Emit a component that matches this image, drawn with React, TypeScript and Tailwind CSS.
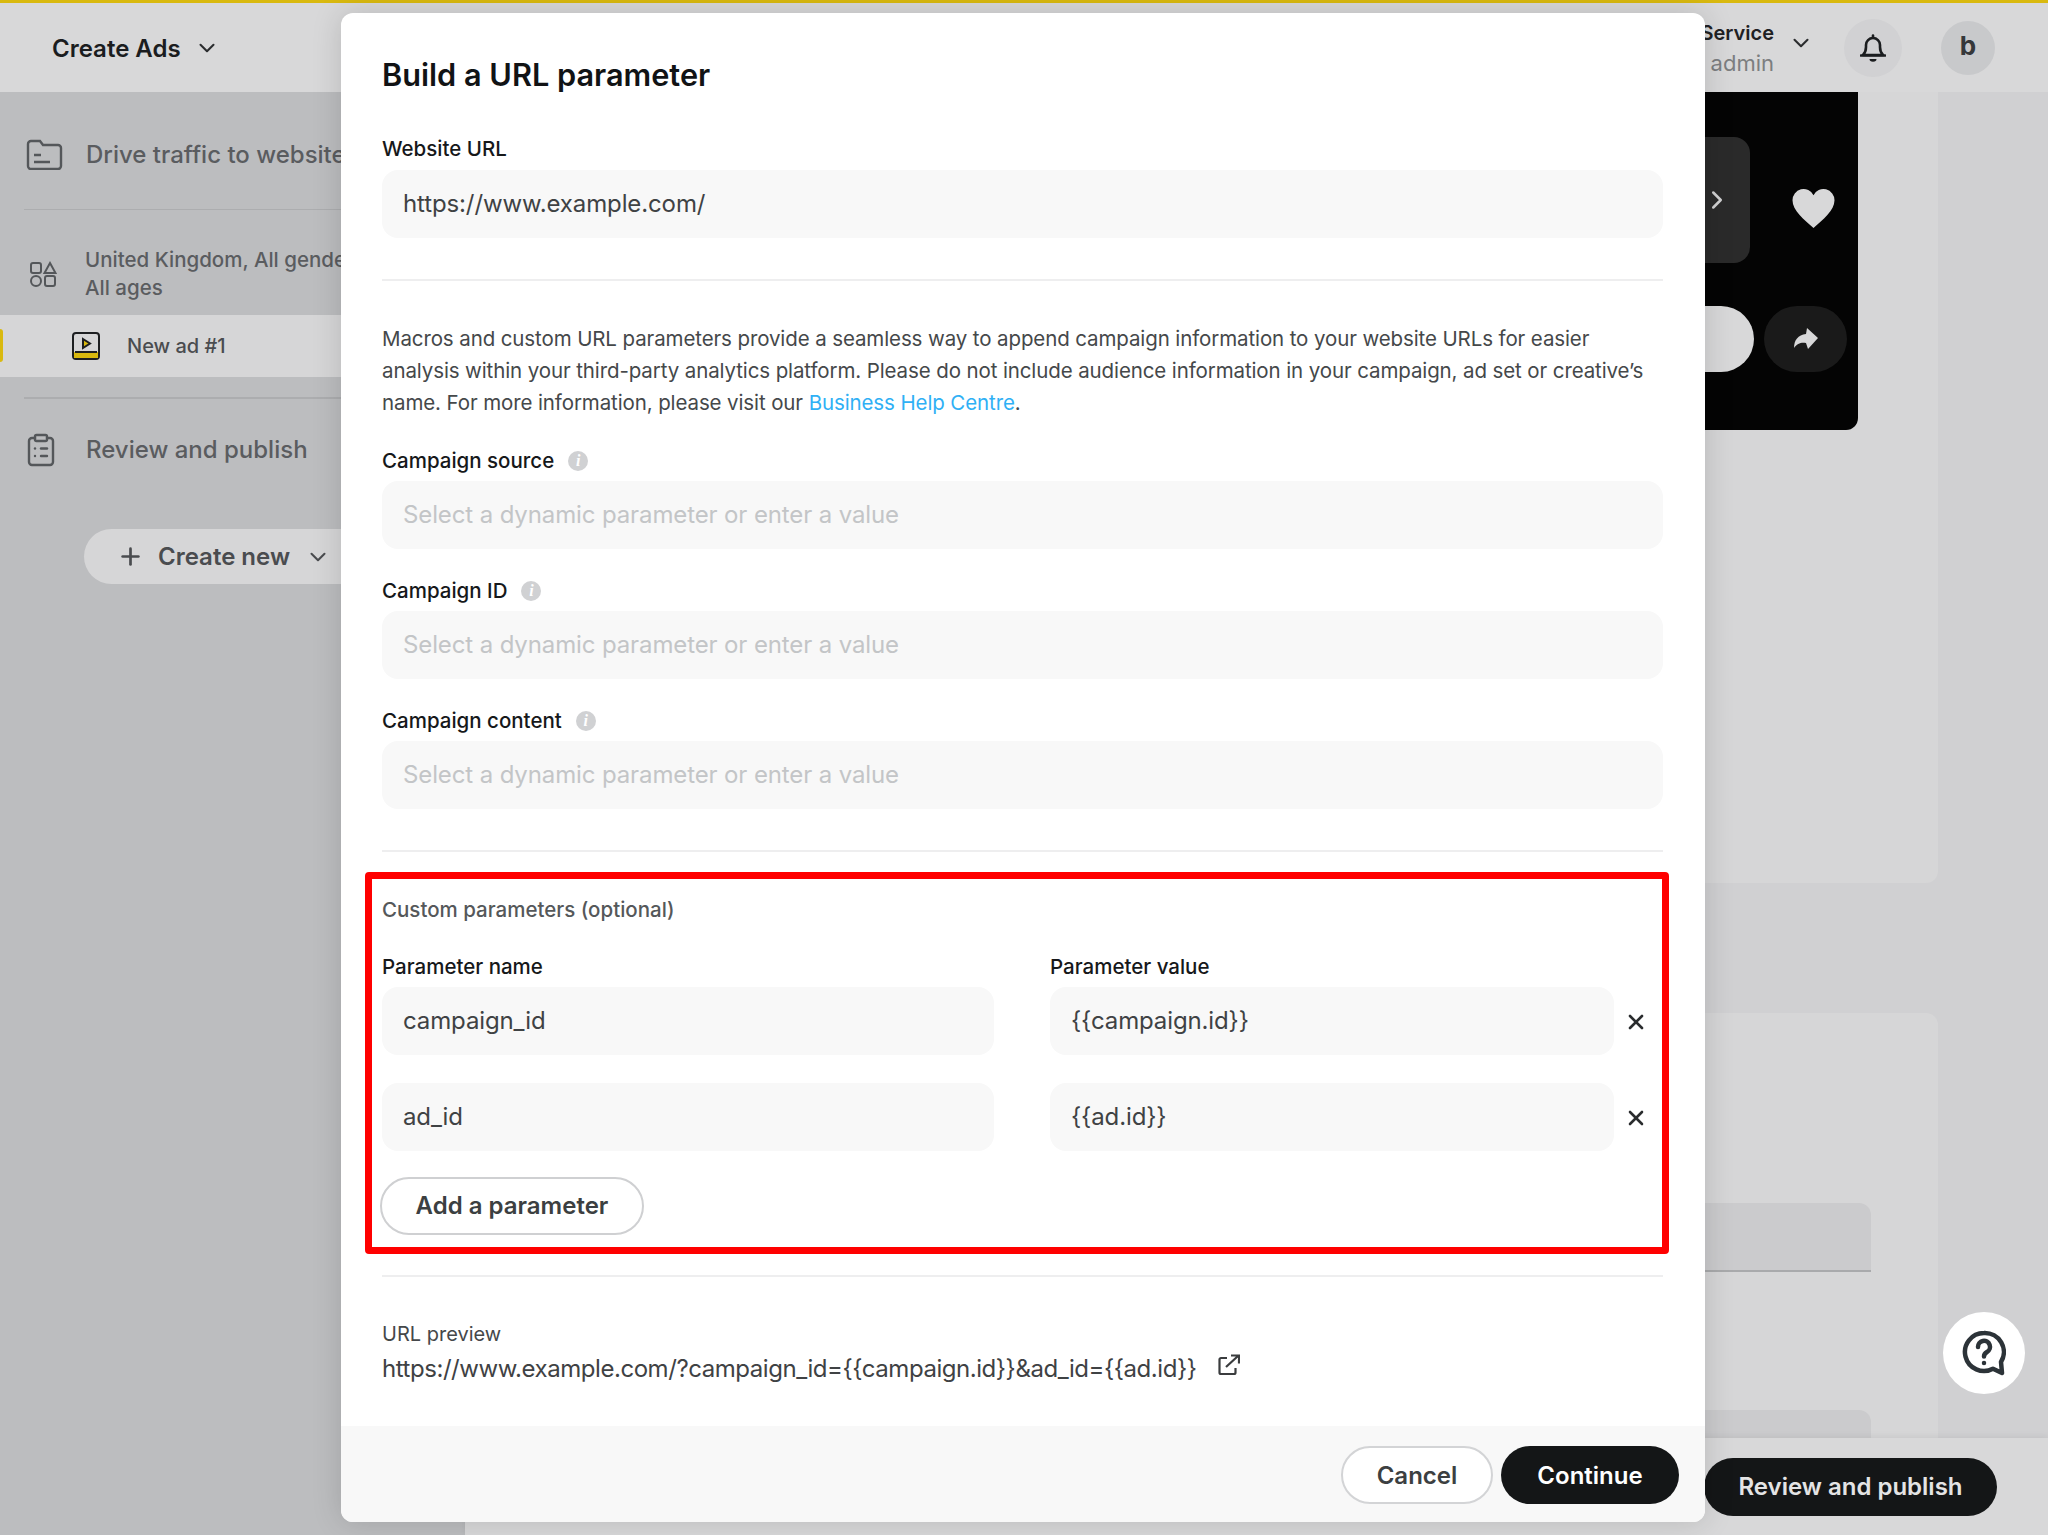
import {ChevronDown, ChevronRight, ClipboardList, Plus, X} from "lucide-react";

function Field({value, placeholder, className = ""}: {value?: string; placeholder?: string; className?: string}) {
  return (
    <div className={`flex h-[68px] items-center rounded-2xl bg-[#f8f8f8] px-[21px] text-[24px] tracking-[-0.12px] ${value ? "text-[#3f4244]" : "text-[#c3c5c7]"} ${className}`}>
      {value ?? placeholder}
    </div>
  );
}

function InfoDot() {
  return (
    <span className="flex h-5 w-5 items-center justify-center rounded-full bg-[#d0d1d3] text-[16px] font-bold italic leading-none text-white [font-family:'Liberation_Serif',serif]">i</span>
  );
}

function ParamField({label}: {label: string}) {
  return (
    <div>
      <div className="flex h-[20px] items-center gap-[14px] text-[20.5px] font-medium text-[#16181a]">
        <span>{label}</span>
        <InfoDot/>
      </div>
      <Field className="mt-[10px]" placeholder="Select a dynamic parameter or enter a value"/>
    </div>
  );
}

function Sidebar() {
  return (
    <aside className="flex w-[465px] shrink-0 flex-col bg-[#bcbdbf] text-[#5a5c5f]">
      <div className="flex h-[117px] items-center pl-[26px] pt-[8px]">
        <svg className="mb-[2px]" width="37" height="32" viewBox="0 0 37 32" fill="none" stroke="#54575a" strokeWidth="2.4">
          <path d="M2 6a3 3 0 0 1 3-3h9l3 4h15a3 3 0 0 1 3 3v18a3 3 0 0 1-3 3H5a3 3 0 0 1-3-3z"/>
          <path d="M8 17h7M8 24h16"/>
        </svg>
        <span className="ml-[23px] whitespace-nowrap text-[24px] font-medium">Drive traffic to website</span>
      </div>
      <div className="mx-6 h-px bg-[#acadaf]"/>
      <div className="flex h-[105px] items-center pl-[29px] pt-[22px]">
        <svg width="28" height="28" viewBox="0 0 28 28" fill="none" stroke="#54575a" strokeWidth="2">
          <rect x="2" y="3" width="10" height="10" rx="2"/>
          <path d="M21 3l5.500 10h-11z"/>
          <circle cx="7" cy="21" r="5"/>
          <rect x="16" y="16" width="10" height="10" rx="2"/>
        </svg>
        <div className="ml-[28px] whitespace-nowrap text-[20.5px] font-medium leading-[28px]">
          United Kingdom, All genders
          <br/>
          All ages
        </div>
      </div>
      <div className="relative flex h-[62px] items-center bg-[#d6d6d7] pl-[72px]">
        <span className="absolute left-0 top-[14px] h-[33px] w-[3px] rounded-r-sm bg-[#d9b90f]"/>
        <svg width="28" height="28" viewBox="0 0 28 28">
          <rect x="1" y="1" width="26" height="26" rx="3" fill="#d6d6d7" stroke="#1d1f21" strokeWidth="2"/>
          <rect x="2" y="20" width="24" height="6" fill="#d9b90f"/>
          <path d="M3 20h22" stroke="#1d1f21" strokeWidth="2"/>
          <path d="M11 7l7 4.500-7 4.500z" fill="#d9b90f" stroke="#1d1f21" strokeWidth="2"/>
        </svg>
        <span className="ml-[27px] text-[20px] font-medium text-[#4a4c4f]">New ad #1</span>
      </div>
      <div className="mx-6 mt-5 h-0.5 bg-[#acadaf]"/>
      <div className="flex h-[102px] items-center pl-[23px]">
        <ClipboardList size={36} strokeWidth={1.6} color="#54575a"/>
        <span className="ml-[27px] text-[24px] font-medium">Review and publish</span>
      </div>
      <button className="ml-[84px] mt-[28px] flex h-[55px] w-[300px] items-center rounded-full bg-[#d6d6d7] pl-[33px] text-[24px] font-semibold text-[#4a4c4f]">
        <Plus size={27} strokeWidth={2.4}/>
        <span className="ml-[14px]">Create new</span>
        <ChevronDown size={26} strokeWidth={1.9} className="ml-[15px]"/>
      </button>
    </aside>
  );
}

function Header() {
  return (
    <header className="flex h-[92px] items-center border-t-[3px] border-[#d9b90f] bg-[#d8d8d9] pl-[52px] pr-[53px] shadow-[0_2px_6px_rgba(0,0,0,0.08)]">
      <span className="mt-[2px] text-[24px] font-semibold text-[#1b1d1f]">Create Ads</span>
      <ChevronDown size={26} strokeWidth={1.9} className="ml-[13px] text-[#2b2d2f]"/>
      <div className="ml-auto text-right leading-[30px]">
        <div className="text-[20px] font-semibold text-[#1f2123]">Service</div>
        <div className="text-[22px] text-[#7c7e80]">admin</div>
      </div>
      <ChevronDown size={26} strokeWidth={1.9} className="mb-[10px] ml-[14px] text-[#2b2d2f]"/>
      <div className="ml-[30px] flex h-[58px] w-[58px] items-center justify-center rounded-full bg-[#d1d1d3]">
        <svg width="26" height="28" viewBox="0 0 26 28" fill="none" stroke="#1b1d1f" strokeWidth="2.600">
          <path d="M3 21c2-2 3-4 3-8V11a7 7 0 0 1 14 0v2c0 4 1 6 3 8z" strokeLinejoin="round"/>
          <path d="M1 21.500h24" strokeLinecap="round"/>
          <path d="M13 1.500v2" strokeLinecap="round"/>
          <path d="M9.500 25h7a3.500 2.800 0 0 1-7 0z" fill="#1b1d1f" stroke="none"/>
        </svg>
      </div>
      <div className="ml-[39px] flex h-[54px] w-[54px] items-center justify-center rounded-full bg-[#c8c9cb] pb-1 text-[26px] font-bold text-[#36383a]">b</div>
    </header>
  );
}

function PreviewCard() {
  return (
    <div className="flex h-[338px] w-[400px] flex-col items-end rounded-br-xl bg-[#040404] pr-[11px] pt-[45px]">
      <div className="flex items-center">
        <div className="flex h-[126px] w-[140px] items-center justify-end rounded-2xl bg-[#2a2a2a] pr-[18px]">
          <ChevronRight size={30} strokeWidth={2} className="text-[#d0d0d1]"/>
        </div>
        <svg className="ml-[40px] mr-[10px] mt-[16px]" width="47" height="42" viewBox="0 0 24 22" fill="#d8d8d9">
          <path d="M12 21.500C7 17 1 12.500 1 7a5.800 5.800 0 0 1 11-2.700A5.800 5.800 0 0 1 23 7c0 5.500-6 10-11 14.500z"/>
        </svg>
      </div>
      <div className="mt-[43px] flex items-center gap-[10px]">
        <div className="h-[66px] w-[140px] rounded-r-full bg-[#d8d8d9]"/>
        <div className="flex h-[66px] w-[83px] items-center justify-center rounded-full bg-[#1a1a1a]">
          <svg width="26" height="24" viewBox="0 0 26 24" fill="#d8d8d9">
            <path d="M14 1l11 10-10 11-2-6C9 15 4 16 1 21c0-8 4-13 12-14z"/>
          </svg>
        </div>
      </div>
    </div>
  );
}

function MainArea() {
  return (
    <main className="flex min-w-0 flex-1 flex-col bg-[#d0d0d2]">
      <div className="flex min-h-0 flex-1 flex-col gap-[130px] overflow-hidden pr-[110px]">
        <section className="flex h-[791px] shrink-0 justify-end rounded-br-xl bg-[#d6d6d7] pr-[80px]">
          <PreviewCard/>
        </section>
        <section className="h-[600px] shrink-0 rounded-tr-xl bg-[#d6d6d7] pl-[40px] pr-[67px] pt-[190px]">
          <div className="h-[69px] rounded-t-xl border-b-2 border-[#a9aaac] bg-[#cbcbcd]"/>
          <div className="mt-[138px] h-[69px] rounded-t-xl bg-[#cbcbcd]"/>
        </section>
      </div>
      <div className="flex h-[97px] shrink-0 items-start justify-end bg-[#d8d8d9] pr-[51px] pt-[20px] shadow-[0_-2px_6px_rgba(0,0,0,0.06)]">
        <button className="h-[58px] w-[293px] rounded-full bg-[#141617] text-[24px] font-semibold text-[#e4e4e5]">Review and publish</button>
      </div>
    </main>
  );
}

function BuildUrlModal() {
  return (
    <div className="absolute left-[341px] top-[13px] flex h-[1509px] w-[1364px] flex-col overflow-hidden rounded-xl bg-white shadow-[0_0_30px_rgba(0,0,0,0.15)]">
      <div className="flex-1 pl-[41px] pr-[42px] pt-[42px]">
        <h1 className="text-[30.7px] font-semibold leading-[40px] text-[#111315]">Build a URL parameter</h1>
        <div className="mt-[44px] h-[20px] text-[20.5px] font-medium leading-[20px] text-[#16181a]">Website URL</div>
        <Field className="mt-[11px]" value="https://www.example.com/"/>
        <div className="mt-[41px] h-0.5 bg-[#eeeeef]"/>
        <p className="mt-[42px] text-[20.5px] leading-[32px] tracking-[-0.11px] text-[#45484a]">
          Macros and custom URL parameters provide a seamless way to append campaign information to your website URLs for easier analysis within your third-party analytics platform. Please do not include audience information in your campaign, ad set or creative’s name. For more information, please visit our <span className="text-[#2fb0f5]">Business Help Centre</span>.
        </p>
        <div className="mt-[32px] flex flex-col gap-[32px]">
          <ParamField label="Campaign source"/>
          <ParamField label="Campaign ID"/>
          <ParamField label="Campaign content"/>
        </div>
        <div className="mt-[41px] h-0.5 bg-[#eeeeef]"/>
        <div className="-ml-[17px] -mr-[6px] mt-[20px] h-[382px] rounded-sm border-[7px] border-[#ff0000] pl-[10px] pr-[2px] pt-[21px]">
          <div className="text-[20.5px] font-medium leading-[20px] text-[#55585a]">Custom parameters (optional)</div>
          <div className="mt-[37px] grid grid-cols-[612px_1fr] gap-x-[56px]">
            <div className="text-[20.5px] font-medium leading-[20px] text-[#16181a]">Parameter name</div>
            <div className="text-[20.5px] font-medium leading-[20px] text-[#16181a]">Parameter value</div>
            <Field className="mt-[10px]" value="campaign_id"/>
            <div className="mt-[10px] flex items-center">
              <Field className="w-[564px]" value="{{campaign.id}}"/>
              <X size={24} strokeWidth={2.6} className="ml-[10px] mt-[2px] text-[#2a2c2e]"/>
            </div>
            <Field className="mt-[28px]" value="ad_id"/>
            <div className="mt-[28px] flex items-center">
              <Field className="w-[564px]" value="{{ad.id}}"/>
              <X size={24} strokeWidth={2.6} className="ml-[10px] mt-[2px] text-[#2a2c2e]"/>
            </div>
          </div>
          <button className="-ml-[2px] mt-[26px] h-[58px] w-[264px] rounded-full border-2 border-[#cfd0d2] bg-white text-[24px] font-semibold text-[#3c3f41]">Add a parameter</button>
        </div>
        <div className="mt-[21px] h-0.5 bg-[#eeeeef]"/>
        <div className="mt-[45px] text-[20px] leading-[24px] text-[#45484a]">URL preview</div>
        <div className="mt-[7px] flex items-center">
          <span className="text-[24px] leading-[32px] tracking-[-0.45px] text-[#3f4244]">{"https://www.example.com/?campaign_id={{campaign.id}}&ad_id={{ad.id}}"}</span>
          <svg className="mb-[8px] ml-[21px]" width="22" height="22" viewBox="0 0 22 22" fill="none" stroke="#3a3c3e" strokeWidth="2.200">
            <path d="M9 4H3a1.500 1.500 0 0 0-1.500 1.500v13A1.500 1.500 0 0 0 3 20h13a1.500 1.500 0 0 0 1.500-1.500V14"/>
            <path d="M8 13L20 2M13 1.500h8v8"/>
          </svg>
        </div>
      </div>
      <div className="flex h-[96px] shrink-0 items-start justify-end gap-2 bg-[#f8f8f8] pr-[26px] pt-[20px]">
        <button className="h-[58px] w-[152px] rounded-full border-2 border-[#d3d4d6] bg-white pt-[2px] text-[24px] font-semibold text-[#3c3f41]">Cancel</button>
        <button className="h-[58px] w-[178px] rounded-full bg-[#141617] pt-[2px] text-[24px] font-semibold text-white">Continue</button>
      </div>
    </div>
  );
}

export default function App() {
  return (
    <div className="relative flex h-[1535px] w-[2048px] flex-col overflow-hidden [font-family:Inter,'Liberation_Sans',sans-serif]">
      <Header/>
      <div className="flex min-h-0 flex-1">
        <Sidebar/>
        <MainArea/>
      </div>
      <BuildUrlModal/>
      <button className="absolute left-[1943px] top-[1312px] flex h-[82px] w-[82px] items-center justify-center rounded-full bg-white">
        <svg width="44" height="46" viewBox="0 0 44 46" fill="none" stroke="#2c3338" strokeWidth="4.500">
          <path d="M22 3a19 19 0 1 0 9 35.700l9 4.300-1-11A19 19 0 0 0 22 3z" strokeLinejoin="round"/>
          <path d="M16 17a6 6 0 1 1 9 5c-2 1.200-3 2.400-3 4.500" strokeLinecap="round"/>
          <circle cx="22" cy="33" r="1.500" fill="#2c3338" strokeWidth="1.500"/>
        </svg>
      </button>
    </div>
  );
}
